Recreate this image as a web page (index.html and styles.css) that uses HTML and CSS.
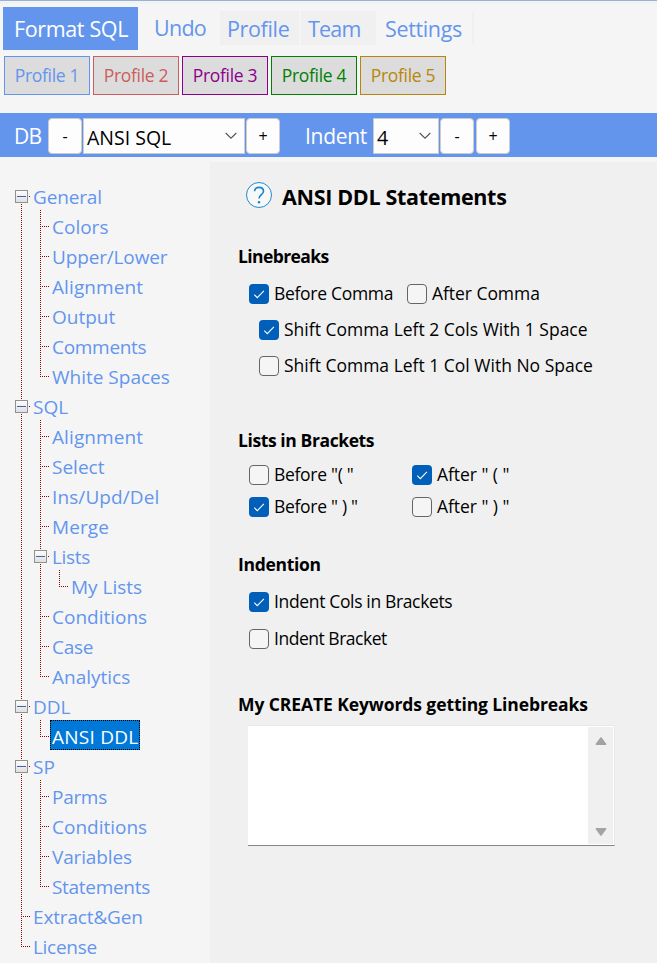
FILE: index.html
```html
<!DOCTYPE html>
<html lang="en">
<head>
<meta charset="utf-8">
<title>SQL Formatter</title>
<link rel="stylesheet" href="styles.css">
</head>
<body>
<svg width="0" height="0" class="defs">
  <symbol id="check" viewBox="0 0 20 20"><path d="M5.3 10.7l3 3 6.6-6.8" fill="none" stroke="#fff" stroke-width="1.1"/></symbol>
  <symbol id="chev" viewBox="0 0 12 8"><path d="M.7 1l5.3 5.2L11.3 1" fill="none" stroke="#555" stroke-width="1.1"/></symbol>
</svg>
<header class="toolbar">
  <button class="format"><span>Format SQL</span></button>
  <button class="undo"><span>Undo</span></button>
  <nav class="menu">
    <a class="m-profile"><span>Profile</span></a>
    <a class="m-team"><span>Team</span></a>
    <a class="m-settings"><span>Settings</span></a>
  </nav>
</header>
<div class="profiles">
  <button class="p1"><span>Profile 1</span></button>
  <button class="p2"><span>Profile 2</span></button>
  <button class="p3"><span>Profile 3</span></button>
  <button class="p4"><span>Profile 4</span></button>
  <button class="p5"><span>Profile 5</span></button>
</div>
<div class="bar">
  <span class="lbl db">DB</span>
  <button>-</button>
  <div class="combo dialect"><span>ANSI SQL</span><svg><use href="#chev"/></svg></div>
  <button>+</button>
  <span class="lbl indent">Indent</span>
  <div class="combo size"><span>4</span><svg><use href="#chev"/></svg></div>
  <button>-</button>
  <button class="last">+</button>
</div>
<div class="body">
<ul class="tree">
  <li><i class="box first"></i><span class="tight">General</span></li>
  <li><i class="v"></i><i class="e up"></i><span>Colors</span></li>
  <li><i class="v"></i><i class="e"></i><span class="tight">Upper/Lower</span></li>
  <li><i class="v"></i><i class="e"></i><span class="wide">Alignment</span></li>
  <li><i class="v"></i><i class="e"></i><span>Output</span></li>
  <li><i class="v"></i><i class="e"></i><span class="tighter">Comments</span></li>
  <li><i class="v"></i><i class="e end"></i><span>White Spaces</span></li>
  <li><i class="box"></i><span>SQL</span></li>
  <li><i class="v"></i><i class="e up"></i><span class="wide">Alignment</span></li>
  <li><i class="v"></i><i class="e"></i><span>Select</span></li>
  <li><i class="v"></i><i class="e"></i><span class="wide">Ins/Upd/Del</span></li>
  <li><i class="v"></i><i class="e"></i><span class="wide">Merge</span></li>
  <li><i class="v"></i><i class="box"></i><span class="tighter">Lists</span></li>
  <li><i class="v"></i><i class="blank"></i><i class="e up end"></i><span>My Lists</span></li>
  <li><i class="v"></i><i class="e"></i><span>Conditions</span></li>
  <li><i class="v"></i><i class="e"></i><span class="tighter">Case</span></li>
  <li><i class="v"></i><i class="e end"></i><span>Analytics</span></li>
  <li><i class="box"></i><span>DDL</span></li>
  <li><i class="v"></i><i class="e up end"></i><span class="sel">ANSI DDL</span></li>
  <li><i class="box"></i><span>SP</span></li>
  <li><i class="v"></i><i class="e up"></i><span class="tighter">Parms</span></li>
  <li><i class="v"></i><i class="e"></i><span>Conditions</span></li>
  <li><i class="v"></i><i class="e"></i><span class="tight">Variables</span></li>
  <li><i class="v"></i><i class="e end"></i><span class="tighter">Statements</span></li>
  <li><i class="e"></i><span class="tight">Extract&amp;Gen</span></li>
  <li><i class="e end"></i><span class="tighter">License</span></li>
</ul>
<main>
  <div class="title">
    <svg width="28" height="28" viewBox="0 0 28 28"><circle cx="14" cy="14" r="12.5" fill="#f8f8f8" stroke="#1f8ad6" stroke-width="1"/><path d="M9.6 10.2C9.6 7.9 11.4 6.4 14 6.4s4.5 1.5 4.5 3.8c0 3.4-4.5 3.7-4.5 7.4" fill="none" stroke="#1484d6" stroke-width="1.6"/><circle cx="14" cy="21.3" r="1.2" fill="#1484d6"/></svg>
    <h1>ANSI DDL Statements</h1>
  </div>
  <h2 class="h-lb">Linebreaks</h2>
  <div class="opts r1">
    <label class="c-a"><b class="on"><svg><use href="#check"/></svg></b><span>Before Comma</span></label>
    <label><b></b><span class="after">After Comma</span></label>
  </div>
  <div class="opts r2"><label><b class="on"><svg><use href="#check"/></svg></b><span>Shift Comma Left 2 Cols With 1 Space</span></label></div>
  <div class="opts r3"><label><b></b><span>Shift Comma Left 1 Col With No Space</span></label></div>
  <h2 class="h-li">Lists in Brackets</h2>
  <div class="opts r4">
    <label class="c-b"><b></b><span>Before "( "</span></label>
    <label><b class="on"><svg><use href="#check"/></svg></b><span class="after">After " ( "</span></label>
  </div>
  <div class="opts r5">
    <label class="c-b"><b class="on"><svg><use href="#check"/></svg></b><span>Before " ) "</span></label>
    <label><b></b><span class="after">After " ) "</span></label>
  </div>
  <h2 class="h-in">Indention</h2>
  <div class="opts r6"><label><b class="on"><svg><use href="#check"/></svg></b><span>Indent Cols in Brackets</span></label></div>
  <div class="opts r7"><label><b></b><span>Indent Bracket</span></label></div>
  <h2 class="h-my">My CREATE Keywords getting Linebreaks</h2>
  <div class="area"><div class="scroll">
    <svg width="12" height="10" viewBox="0 0 12 10"><path d="M1.4 8.2L6 2l4.6 6.2z" fill="#a3a3a3" stroke="#a3a3a3" stroke-width="1.6" stroke-linejoin="round"/></svg>
    <svg width="12" height="10" viewBox="0 0 12 10"><path d="M1.4 1.8L6 8l4.6-6.2z" fill="#a3a3a3" stroke="#a3a3a3" stroke-width="1.6" stroke-linejoin="round"/></svg>
  </div></div>
</main>
</div>
</body>
</html>
```

FILE: styles.css
```css
*, *::before, *::after { box-sizing: border-box; }
body { margin: 0; width: 657px; height: 963px; overflow: hidden; background: #f5f5f5; font-family: "Open Sans", "Noto Sans", sans-serif; color: #000; border-top: 1px solid #9ab3d5; }
button { font: inherit; padding: 0; margin: 0; border: 0; background: none; color: inherit; }
span, h1, h2 { white-space: pre; }
.defs { display: block; }
.toolbar { height: 55px; padding: 3px 0 0 3px; display: flex; font-size: 21.5px; letter-spacing: -.35px; color: #6495ed; border-top: 3px solid #f1f2f4; }
.format { width: 135px; height: 43px; background: #6495ed; color: #fff; letter-spacing: -.35px; padding-left: 1px; }
.undo { width: 82px; height: 43px; padding: 0 0 2px 2px; letter-spacing: -.7px; }
.menu { display: flex; margin-top: 4px; height: 34px; line-height: 36px; }
.menu a { padding-left: 7px; background: #f0f0f0; }
.m-profile { width: 79px; margin-right: 2px; }
.m-team { width: 75px; }
.menu .m-team { letter-spacing: -.8px; }
.menu .m-settings { width: 98px; background: none; border-right: 2px solid #f0f0f0; padding-left: 9px; }
.profiles { display: flex; gap: 3px; padding-left: 4px; height: 57px; }
.profiles button { width: 86px; height: 39px; border: 1px solid; background: #dcdcdc; font-size: 17.5px; letter-spacing: -.3px; padding-bottom: 1px; }
.p1 { color: #6495ed; } .p2 { color: #cd5c5c; } .p3 { color: #8b008b; } .p4 { color: #008000; } .p5 { color: #b8860b; }
.bar { height: 44px; background: #6495ed; display: flex; padding: 5px 0 0 14px; line-height: 36px; }
.lbl { color: #fff; font-size: 21px; letter-spacing: -.3px; }
.db { width: 34px; letter-spacing: -.8px; } .indent { width: 68px; margin-left: 25px; }
.bar button { width: 34px; height: 36px; border: 1px solid #ccc; border-radius: 4px; background: #fdfdfd; font-size: 16px; line-height: 32px; }
.bar .last { margin-left: 2px; }
.combo { height: 36px; border: 1px solid #ccc; background: #fdfdfd; display: flex; justify-content: space-between; align-items: center; padding: 4px 7px 0 3px; margin: 0 1px; font-size: 19.5px; }
.combo svg { width: 12px; height: 8px; margin-top: -5px; }
.dialect { width: 162px; } .size { width: 66px; margin-left: 0; }
.body { display: flex; height: 806px; }
.tree { list-style: none; margin: 0; padding: 25px 0 0 12px; width: 210px; font-size: 19px; color: #6495ed; }
.tree .wide { letter-spacing: .1px; } .tree .tight { letter-spacing: -.15px; } .tree .tighter { letter-spacing: -.3px; }
.tree li { height: 30px; line-height: 30px; display: flex; }
.tree i { position: relative; width: 19px; height: 30px; flex: none; background: repeating-linear-gradient(#8b0000 0 1px, transparent 1px 2px) 9px 0 / 1px 30px no-repeat; }
.tree .blank { background: none; }
.tree li:nth-child(13) .v + .box { background-size: 1px 30px; }
.tree span { padding: 0 2px; height: 30px; }
.tree .e::after, .tree .box::after { content: ""; position: absolute; left: 11px; top: 14px; width: 7px; height: 1px; background: repeating-linear-gradient(90deg, #8b0000 0 1px, transparent 1px 2px); }
.tree .up::before { content: ""; position: absolute; left: 9px; top: -2px; width: 1px; height: 1px; background: #8b0000; }
.tree .blank { background: repeating-linear-gradient(#8b0000 0 1px, transparent 1px 2px) 9px 0 / 1px 30px no-repeat; }
.tree .end { background-size: 1px 15px; }
.tree .first { background-position: 9px 22px; }
.tree .box::after { left: 17px; width: 1px; }
.tree .box::before { content: ""; position: absolute; left: 2px; top: 7px; width: 15px; height: 15px; border: 1px solid #f5f5f5; background: linear-gradient(#4560b0, #4560b0) 2px 6px / 9px 1px no-repeat, linear-gradient(#fff, #ddd); box-shadow: inset 0 0 0 1px #919191; }
.tree .sel { background: #0078d7; color: #fff; outline: 1px dotted #000; outline-offset: -1px; letter-spacing: .25px; margin-top: -2px; line-height: 34px; }
main { flex: 1; margin-top: 5px; background: #f0f0f0; padding-left: 28px; }
.title { display: flex; height: 66px; padding: 19px 0 0 7px; }
h1 { font-size: 21.5px; font-weight: 700; margin: 0 0 0 9px; line-height: 32px; letter-spacing: -.32px; }
h2 { font-size: 17.5px; font-weight: 700; margin: 0; line-height: 30px; height: 30px; letter-spacing: -.4px; }
.opts { display: flex; height: 36px; padding-left: 11px; align-items: center; font-size: 17.5px; }
.opts span { margin-top: -2px; }
label { display: flex; align-items: center; gap: 5px; }
label b { width: 20px; height: 20px; flex: none; border: 1px solid #666; border-radius: 4px; background: #f5f5f5; }
label b.on { border: 0; background: #005fb8; }
label svg { width: 20px; height: 20px; display: block; }
.h-lb { margin-top: 13px; letter-spacing: -.6px; }
.r1 { margin-top: 5px; }
.c-a { width: 158px; } .c-b { width: 163px; }
.r1, .r4, .r5 { letter-spacing: -.3px; } .opts .after { letter-spacing: -.05px; }
.r2, .r3 { padding-left: 21px; }
.h-li { margin-top: 41px; }
.r4 { margin-top: 4px; } .r4, .r5 { height: 32px; }
.h-in { margin-top: 26px; letter-spacing: -.3px; }
.r6 { margin-top: 5px; letter-spacing: -.35px; } .r7 { margin-top: 1px; letter-spacing: -.48px; }
.h-my { margin-top: 32px; letter-spacing: -.09px; }
.area { width: 367px; height: 121px; margin: 6px 0 0 10px; background: #fff; border: 1px solid #e8e8e8; border-left: 0; border-bottom-color: #868686; display: flex; justify-content: flex-end; padding: 1px; }
.scroll { width: 25px; background: #f0f0f0; display: flex; flex-direction: column; justify-content: space-between; align-items: center; padding: 9px 0 7px; }
```
